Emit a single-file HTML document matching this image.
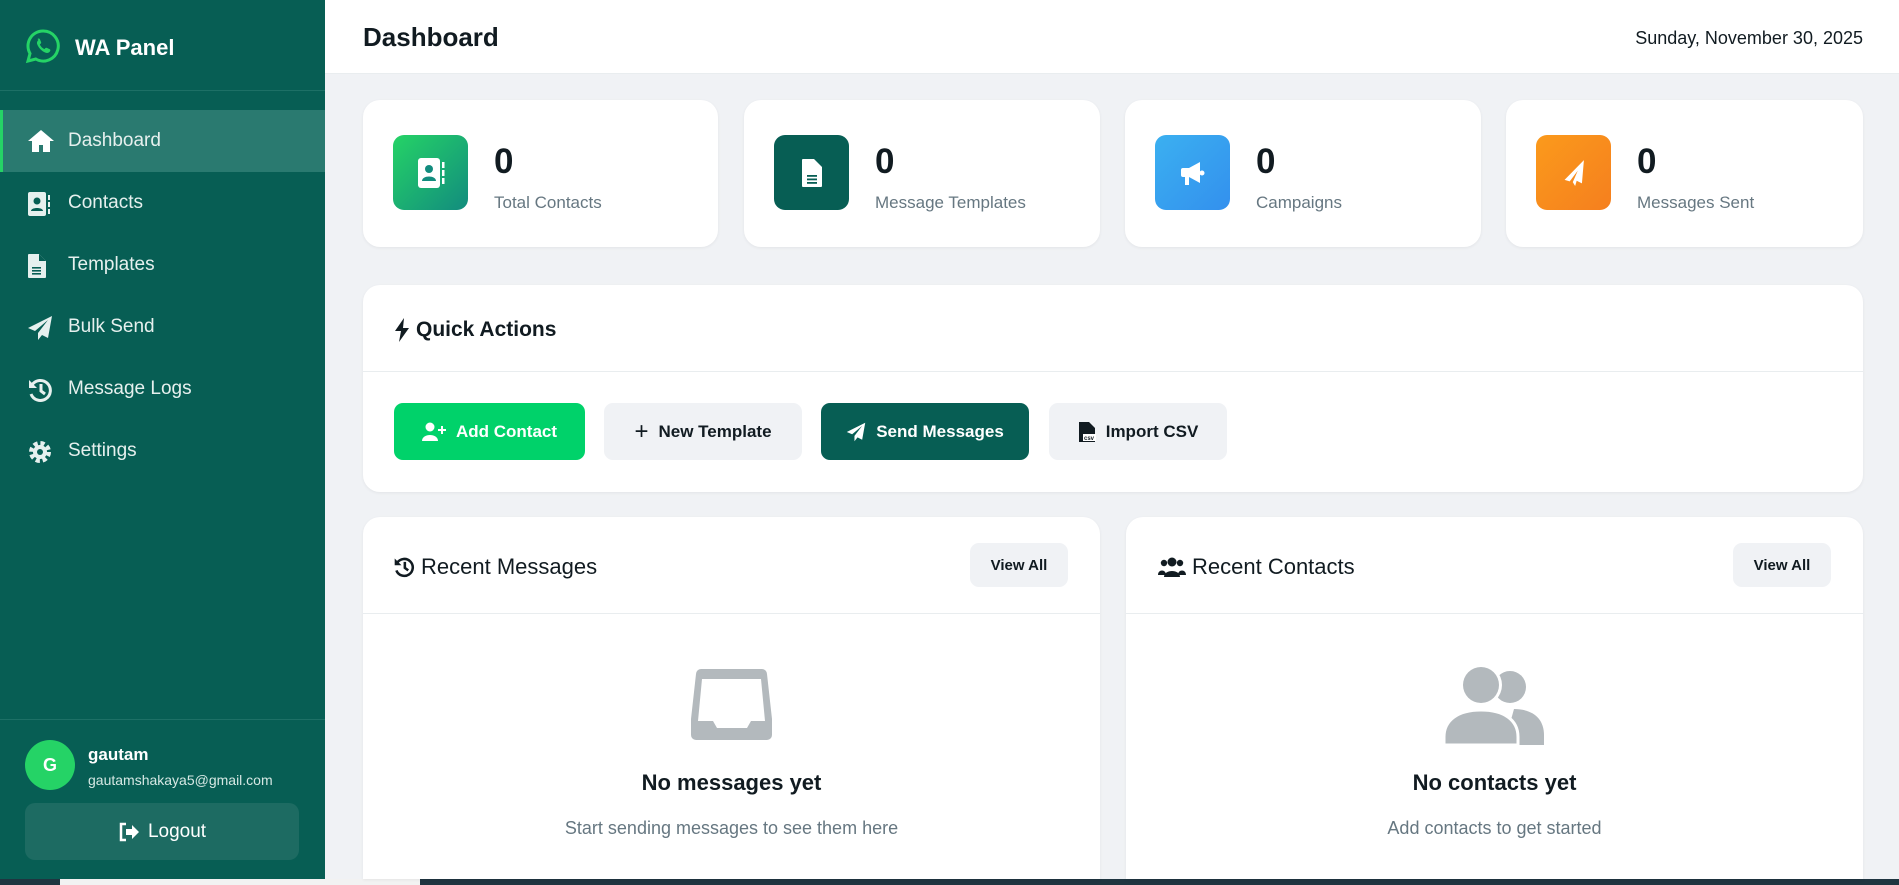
<!DOCTYPE html>
<html style="overflow:hidden;height:885px"><head><meta charset="utf-8"><style>
*{box-sizing:border-box;margin:0;padding:0}
body{width:1899px;height:885px;overflow:hidden;background:#f0f2f5;font-family:"Liberation Sans",sans-serif;position:relative;color:#111b21}
.abs{position:absolute}
#side{left:0;top:0;width:325px;height:879px;background:#075e54;color:#fff}
.nav{position:absolute;left:0;width:325px;height:62px;display:flex;align-items:center;padding-left:68px;font-size:19px;color:#e6f0ee}
.nav svg{position:absolute;left:27px;top:19px}
.nav.active{background:#2a7a70;border-left:3px solid #25d366}
.card{position:absolute;background:#fff;border-radius:17px;box-shadow:0 1px 3px rgba(0,0,0,.06);overflow:hidden}
.ic{position:absolute;left:30px;top:35px;width:75px;height:75px;border-radius:11px;display:flex;align-items:center;justify-content:center}
.num{position:absolute;left:131px;top:42px;font-size:35px;font-weight:bold;color:#111b21}
.lbl{position:absolute;left:131px;top:93px;font-size:17px;color:#667781}
.btn{position:absolute;top:403px;height:57px;border-radius:9px;display:flex;align-items:center;justify-content:center;gap:10px;font-size:17px;font-weight:bold}
.va{position:absolute;width:98px;height:44px;border-radius:9px;background:#f0f2f5;font-size:15px;font-weight:bold;display:flex;align-items:center;justify-content:center;top:26px}
h3{font-size:22px;font-weight:normal;position:absolute;display:flex;align-items:center;gap:6px}
</style></head><body>
<div id="side" class="abs">
  <svg class="abs" style="left:25px;top:28px" width="36" height="36" viewBox="0 0 36 36"><path d="M18 3a15 15 0 0 0-13 22.5L3 33l7.8-2A15 15 0 1 0 18 3z" fill="none" stroke="#25d366" stroke-width="3"/><path d="M12.5 11c1-.8 2-.6 2.4.3l1.2 2.8c.2.6 0 1.1-.5 1.6l-.8.8c.9 2 2.6 3.7 4.6 4.6l.8-.8c.5-.5 1-.6 1.6-.4l2.8 1.2c.9.4 1 1.4.3 2.4-1 1.3-2.6 1.9-4.2 1.3-3.9-1.5-7-4.6-8.5-8.5-.6-1.7 0-3.3 1.3-4.3z" fill="#25d366"/></svg>
  <div class="abs" style="left:75px;top:35px;font-size:22px;font-weight:bold">WA Panel</div>
  <div class="abs" style="left:0;top:90px;width:325px;height:1px;background:#1d7066"></div>
  <div class="nav active" style="top:110px;padding-left:65px"><svg width="28" height="24" viewBox="0 0 28 24" style="left:24px"><path d="M14 1L1 12h4v11h7v-7h4v7h7V12h4z" fill="#fff"/></svg>Dashboard</div>
  <div class="nav" style="top:172px"><svg width="24" height="26" viewBox="0 0 24 26"><rect x="1" y="1" width="18" height="24" rx="2" fill="#e6f0ee"/><circle cx="10" cy="10" r="3.5" fill="#075e54"/><path d="M4 20c0-4 12-4 12 0z" fill="#075e54"/><rect x="21" y="4" width="2" height="5" fill="#e6f0ee"/><rect x="21" y="11" width="2" height="5" fill="#e6f0ee"/><rect x="21" y="18" width="2" height="5" fill="#e6f0ee"/></svg>Contacts</div>
  <div class="nav" style="top:234px"><svg width="20" height="26" viewBox="0 0 20 26"><path d="M2 1h10l7 7v16a1 1 0 0 1-1 1H2a1 1 0 0 1-1-1V2a1 1 0 0 1 1-1z" fill="#e6f0ee"/><path d="M12 1v7h7" fill="#075e54"/><rect x="5" y="14" width="9" height="1.6" fill="#075e54"/><rect x="5" y="17" width="9" height="1.6" fill="#075e54"/><rect x="5" y="20" width="9" height="1.6" fill="#075e54"/></svg>Templates</div>
  <div class="nav" style="top:296px"><svg width="26" height="26" viewBox="0 0 26 26"><path d="M25 1L1 13l7 3 13-11-10 13v7l4-5 6 3z" fill="#e6f0ee"/></svg>Bulk Send</div>
  <div class="nav" style="top:358px"><svg width="26" height="26" viewBox="0 0 26 26"><path d="M5 8a10 10 0 1 1-1 9" fill="none" stroke="#e6f0ee" stroke-width="3"/><path d="M2 3v8h8z" fill="#e6f0ee"/><path d="M14 7v7l4 3" fill="none" stroke="#e6f0ee" stroke-width="3"/></svg>Message Logs</div>
  <div class="nav" style="top:420px"><svg width="26" height="26" viewBox="0 0 26 26"><circle cx="13" cy="13" r="8.5" fill="none" stroke="#e6f0ee" stroke-width="5" stroke-dasharray="4 2.7"/><circle cx="13" cy="13" r="7" fill="#e6f0ee"/><circle cx="13" cy="13" r="3" fill="#075e54"/></svg>Settings</div>
  <div class="abs" style="left:0;top:719px;width:325px;height:1px;background:#1d7066"></div>
  <div class="abs" style="left:25px;top:740px;width:50px;height:50px;border-radius:50%;background:#25d366;display:flex;align-items:center;justify-content:center;font-weight:bold;font-size:18px">G</div>
  <div class="abs" style="left:88px;top:745px;font-size:17px;font-weight:bold">gautam</div>
  <div class="abs" style="left:88px;top:772px;font-size:14px;color:#d6e8e4">gautamshakaya5@gmail.com</div>
  <div class="abs" style="left:25px;top:803px;width:274px;height:57px;border-radius:10px;background:#1d6b62;display:flex;align-items:center;justify-content:center;gap:8px;font-size:19px"><svg width="22" height="20" viewBox="0 0 22 20"><path d="M8 2H3v16h5" fill="none" stroke="#fff" stroke-width="2.5"/><path d="M8 7h6V3l7 7-7 7v-4H8z" fill="#fff"/></svg>Logout</div>
</div>
<div class="abs" style="left:0;top:879px;width:1899px;height:6px;background:#1f3540"></div>
<div class="abs" style="left:60px;top:879px;width:360px;height:6px;background:#f2f2f2"></div>

<div class="abs" style="left:325px;top:0;width:1574px;height:74px;background:#fff;border-bottom:1px solid #e9edef"></div>
<div class="abs" style="left:363px;top:22px;font-size:26px;font-weight:bold">Dashboard</div>
<div class="abs" style="left:1616px;top:28px;width:247px;text-align:right;font-size:18px">Sunday, November 30, 2025</div>

<div class="card" style="left:363px;top:100px;width:355px;height:147px"><div class="ic" style="background:linear-gradient(135deg,#25d366,#128c7e)"><svg width="30" height="32" viewBox="0 0 30 32"><rect x="2" y="1" width="22" height="30" rx="3" fill="#fff"/><circle cx="13" cy="12" r="4" fill="#128c7e"/><path d="M6 24c0-6 14-6 14 0z" fill="#128c7e"/><rect x="26" y="5" width="2.5" height="6" fill="#fff"/><rect x="26" y="13" width="2.5" height="6" fill="#fff"/><rect x="26" y="21" width="2.5" height="6" fill="#fff"/></svg></div><div class="num">0</div><div class="lbl">Total Contacts</div></div>
<div class="card" style="left:744px;top:100px;width:356px;height:147px"><div class="ic" style="background:#075e54"><svg width="22" height="30" viewBox="0 0 22 30"><path d="M2 1h11l8 8v19a1 1 0 0 1-1 1H2a1 1 0 0 1-1-1V2a1 1 0 0 1 1-1z" fill="#fff"/><rect x="6" y="17" width="10" height="1.8" fill="#075e54"/><rect x="6" y="20.5" width="10" height="1.8" fill="#075e54"/><rect x="6" y="24" width="10" height="1.8" fill="#075e54"/></svg></div><div class="num">0</div><div class="lbl">Message Templates</div></div>
<div class="card" style="left:1125px;top:100px;width:356px;height:147px"><div class="ic" style="background:linear-gradient(135deg,#3bb0f0,#3390ee)"><svg width="30" height="30" viewBox="0 0 30 30"><path d="M22 4L11 10H5a2 2 0 0 0-2 2v5a2 2 0 0 0 2 2h2v8h4v-8l11 6z" fill="#fff"/><circle cx="24" cy="15" r="2.5" fill="#fff"/></svg></div><div class="num">0</div><div class="lbl">Campaigns</div></div>
<div class="card" style="left:1506px;top:100px;width:357px;height:147px"><div class="ic" style="background:linear-gradient(135deg,#fb9a1c,#f57f1e)"><svg width="30" height="30" viewBox="0 0 30 30"><path d="M26 3L5 21l5 2 9-10-6 11 2 4 2-5 5 3z" fill="#fff" transform="rotate(-5 15 15)"/></svg></div><div class="num">0</div><div class="lbl">Messages Sent</div></div>

<div class="card" style="left:363px;top:285px;width:1500px;height:207px"></div>
<h3 style="left:394px;top:318px;font-weight:bold;font-size:21px"><svg width="16" height="24" viewBox="0 0 16 24"><path d="M10 0L1 13h6l-2 11 10-14H9z" fill="#111b21"/></svg>Quick Actions</h3>
<div class="abs" style="left:363px;top:371px;width:1500px;height:1px;background:#e9edef"></div>
<div class="btn" style="left:394px;width:191px;background:#00d26a;color:#fff"><svg width="24" height="20" viewBox="0 0 24 20"><circle cx="8" cy="5" r="4.5" fill="#fff"/><path d="M0 19c0-8 16-8 16 0z" fill="#fff"/><path d="M20 4v8M16 8h8" stroke="#fff" stroke-width="2"/></svg>Add Contact</div>
<div class="btn" style="left:604px;width:198px;background:#f0f2f5;color:#111b21"><span style="font-size:24px;font-weight:normal">+</span>New Template</div>
<div class="btn" style="left:821px;width:208px;background:#075e54;color:#fff"><svg width="20" height="20" viewBox="0 0 26 26"><path d="M25 1L1 13l7 3 13-11-10 13v7l4-5 6 3z" fill="#fff"/></svg>Send Messages</div>
<div class="btn" style="left:1049px;width:178px;background:#f0f2f5;color:#111b21"><svg width="18" height="22" viewBox="0 0 18 22"><path d="M1 1h10l6 6v14H1z" fill="#111b21"/><rect x="5" y="13" width="13" height="7" fill="#fff"/><text x="6" y="19" font-size="6" font-family="Liberation Sans" font-weight="bold" fill="#111b21">csv</text></svg>Import CSV</div>

<div class="card" style="left:363px;top:517px;width:737px;height:362px;border-radius:17px 17px 0 0">
  <h3 style="left:30px;top:37px"><svg width="22" height="22" viewBox="0 0 26 26"><path d="M5 8a10 10 0 1 1-1 9" fill="none" stroke="#111b21" stroke-width="3"/><path d="M2 3v8h8z" fill="#111b21"/><path d="M14 7v7l4 3" fill="none" stroke="#111b21" stroke-width="3"/></svg>Recent Messages</h3>
  <div class="va" style="left:607px">View All</div>
  <div class="abs" style="left:0;top:96px;width:737px;height:1px;background:#e9edef"></div>
  <svg class="abs" style="left:328px;top:152px" width="81" height="71" viewBox="0 0 81 71"><path d="M10 0h61a5 5 0 0 1 5 5l5 45v16a5 5 0 0 1-5 5H5a5 5 0 0 1-5-5V50L5 5a5 5 0 0 1 5-5z" fill="#b3b9bd"/><path d="M11 10h59l4 42H60l-4 7H26l-4-7H7z" fill="#fff"/></svg>
  <div class="abs" style="left:0;width:737px;top:253px;text-align:center;font-size:22px;font-weight:bold">No messages yet</div>
  <div class="abs" style="left:0;width:737px;top:301px;text-align:center;font-size:18px;color:#667781">Start sending messages to see them here</div>
</div>
<div class="card" style="left:1126px;top:517px;width:737px;height:362px;border-radius:17px 17px 0 0">
  <h3 style="left:32px;top:37px"><svg width="28" height="22" viewBox="0 0 28 22"><circle cx="14" cy="6" r="4.5" fill="#111b21"/><circle cx="6" cy="7" r="3.2" fill="#111b21"/><circle cx="22" cy="7" r="3.2" fill="#111b21"/><path d="M6 21c0-8 16-8 16 0z" fill="#111b21"/><path d="M0 19c0-6 8-6 8 0zM20 19c0-6 8-6 8 0z" fill="#111b21"/></svg>Recent Contacts</h3>
  <div class="va" style="left:607px">View All</div>
  <div class="abs" style="left:0;top:96px;width:737px;height:1px;background:#e9edef"></div>
  <svg class="abs" style="left:318px;top:146px" width="100" height="82" viewBox="0 0 100 82"><circle cx="66" cy="24" r="16" fill="#b3b9bd"/><path d="M60 82h40v-10c0-17-12-26-30-26z" fill="#b3b9bd"/><circle cx="37" cy="22" r="21" fill="#fff"/><circle cx="37" cy="22" r="18" fill="#b3b9bd"/><path d="M0 82v-8c0-17 14-27 37-27s37 10 37 27v8z" fill="#b3b9bd" stroke="#fff" stroke-width="3"/></svg>
  <div class="abs" style="left:0;width:737px;top:253px;text-align:center;font-size:22px;font-weight:bold">No contacts yet</div>
  <div class="abs" style="left:0;width:737px;top:301px;text-align:center;font-size:18px;color:#667781">Add contacts to get started</div>
</div>
</body></html>
